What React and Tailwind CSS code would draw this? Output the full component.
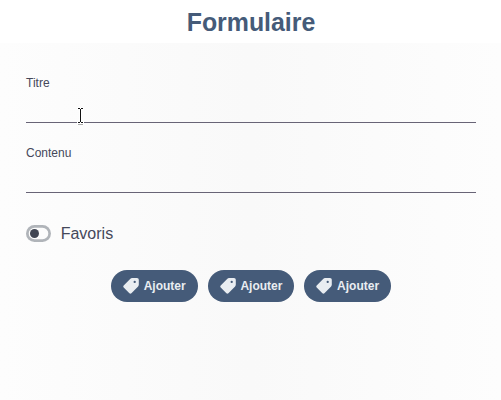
function TagIcon() {
  return (
    <svg className="h-4 w-4 shrink-0" viewBox="0 0 16 16">
      <path
        fill="#e9edf1"
        fillRule="evenodd"
        d="M9 0H14Q15.8 0 15.8 1.8V6.8Q15.8 7.7 15.1 8.4L8.4 15.3Q7.4 16.2 6.4 15.3L.7 9.6Q-.2 8.6.7 7.6L7.4.7Q8.1 0 9 0ZM11.7 2.8A1.15 1.15 0 1 0 11.7 5.1A1.15 1.15 0 1 0 11.7 2.8Z"
      />
    </svg>
  );
}

function Field({ label, children }) {
  return (
    <label className="relative block h-[70px] w-[450px] pt-2 text-xs leading-4 text-[#45485a]">
      {label}
      <input className="mt-1 block h-7 w-full border-b border-[#686476] bg-transparent outline-none" />
      {children}
    </label>
  );
}

function AddButton() {
  return (
    <button className="flex h-8 w-[86.7px] items-center rounded-full bg-[#455b79] pl-3 text-xs font-bold text-[#e9edf1]">
      <TagIcon />
      <span className="ml-[4.6px]">Ajouter</span>
    </button>
  );
}

export default function App() {
  return (
    <div className="flex h-[400px] w-[501px] flex-col overflow-hidden bg-white font-['Liberation_Sans',Arial,sans-serif]">
      <h1 className="h-[43px] pt-[7px] pl-px text-center text-[24.9px] leading-[30px] font-bold text-[#455b79]">
        Formulaire
      </h1>
      <main className="flex-1 bg-linear-to-r from-[#fdfdfd] via-[#f9f9f9] to-[#fdfdfd] pt-6 pl-[26px]">
        <Field label="Titre">
          <svg className="absolute top-10 left-[51px] h-[18px] w-[7px]" viewBox="0 0 7 18">
            <path d="M0 0H7V3H5V14H7V18H0V14H2V3H0Z" fill="#fff" />
            <path d="M1 1.5H3M4 1.5H6M3.5 2V15M1 15.5H3M4 15.5H6" stroke="#111" />
            <path d="M1 17.5H6" stroke="#aaa" />
          </svg>
        </Field>
        <Field label="Contenu" />
        <div className="mt-[17px] flex h-5 items-center text-base text-[#45485a]">
          <span className="mb-px flex h-[17px] w-[25px] items-center rounded-full bg-[#fcfcfc] pl-[3.8px] inset-ring-[2.7px] inset-ring-[#b0b4b9]">
            <span className="h-[9px] w-[9px] rounded-full bg-[#404552]" />
          </span>
          <span className="ml-[9.7px]">Favoris</span>
        </div>
        <div className="mt-[26px] ml-[85.1px] flex gap-[10px]">
          <AddButton />
          <AddButton />
          <AddButton />
        </div>
      </main>
    </div>
  );
}
